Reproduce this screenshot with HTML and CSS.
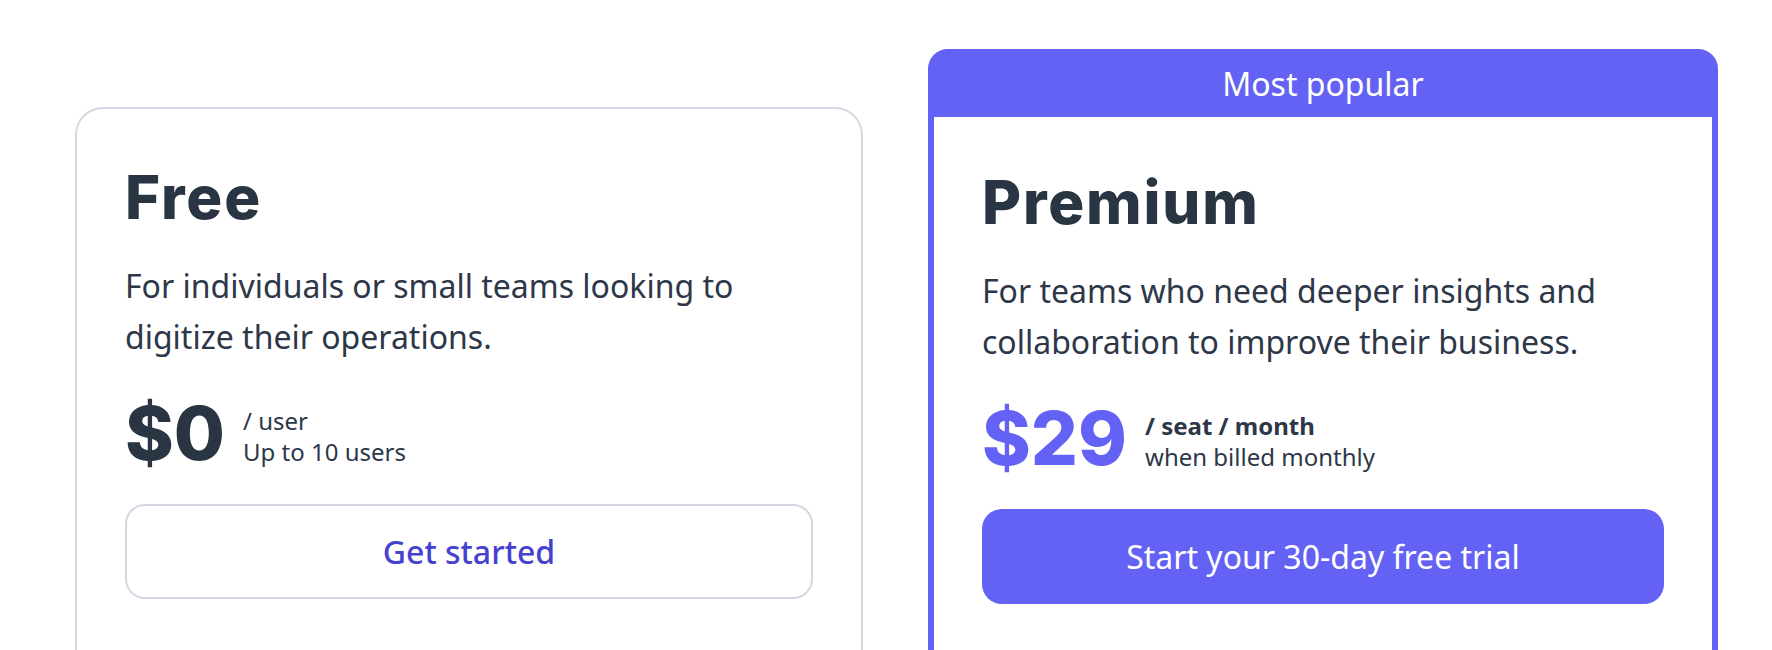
FILE: index.html
```html
<!DOCTYPE html>
<html lang="en">
<head>
<meta charset="utf-8">
<title>Pricing</title>
<link rel="stylesheet" href="styles.css">
</head>
<body>
<main class="plans">
  <section class="plan plan-free">
    <div class="plan-body">
      <h2 class="plan-name">Free</h2>
      <p class="plan-desc">For individuals or small teams looking to digitize their operations.</p>
      <div class="price-row">
        <span class="price">$0</span>
        <div class="price-meta">
          <span class="meta-line">/ user</span>
          <span class="meta-line">Up to 10 users</span>
        </div>
      </div>
      <a class="btn btn-outline" href="#">Get started</a>
    </div>
  </section>
  <section class="plan plan-premium">
    <div class="ribbon">Most popular</div>
    <div class="plan-body">
      <h2 class="plan-name">Premium</h2>
      <p class="plan-desc">For teams who need deeper insights and collaboration to improve their business.</p>
      <div class="price-row">
        <span class="price price-accent">$29</span>
        <div class="price-meta">
          <span class="meta-line meta-strong">/ seat / month</span>
          <span class="meta-line">when billed monthly</span>
        </div>
      </div>
      <a class="btn btn-solid" href="#">Start your 30-day free trial</a>
    </div>
  </section>
</main>
</body>
</html>
```
FILE: styles.css
```css
* { box-sizing: border-box; }
html, body { margin: 0; padding: 0; background: #ffffff; }
body {
  font-family: "Noto Sans", "Open Sans", sans-serif;
  color: #2d3748;
  height: 650px;
  overflow: hidden;
}
.plans {
  display: flex;
  align-items: flex-start;
  gap: 65px;
  padding: 49px 0 0 75px;
}
.plan {
  background: #fff;
  height: 700px;
}
.plan-free {
  width: 788px;
  margin-top: 58px;
  border: 2px solid #d3d8e2;
  border-radius: 28px;
}
.plan-premium {
  width: 790px;
  border: 6px solid #6462f5;
  border-radius: 20px 20px 0 0;
}
.ribbon {
  background: #6462f5;
  color: #fff;
  height: 62px;
  display: flex;
  align-items: center;
  justify-content: center;
  font-size: 32px;
  padding-bottom: 6px;
}
.plan-body {
  padding: 52px 48px 0 48px;
}
.plan-premium .plan-body { padding-top: 49px; }
.plan-name {
  margin: 0;
  font-family: Inter, "Noto Sans", sans-serif;
  font-weight: 800;
  font-size: 60px;
  line-height: 72px;
  color: #2a3544;
  letter-spacing: 1.8px;
}
.plan-desc {
  margin: 27px 0 0 0;
  font-size: 32px;
  line-height: 51px;
}
.price-row {
  display: flex;
  align-items: center;
  gap: 18px;
  margin-top: 34px;
}
.price {
  font-family: Inter, "Noto Sans", sans-serif;
  font-weight: 800;
  font-size: 74px;
  line-height: 74px;
  color: #2a3544;
}
.price-accent { color: #6462f5; }
.price-meta {
  display: flex;
  flex-direction: column;
  font-size: 24px;
  line-height: 31px;
  padding-top: 6px;
}
.meta-strong { font-weight: 700; }
.btn {
  display: flex;
  align-items: center;
  justify-content: center;
  height: 95px;
  margin-top: 34px;
  border-radius: 20px;
  font-size: 32px;
  text-decoration: none;
}
.btn-outline {
  border: 2px solid #d3d8e2;
  color: #4641d0;
  font-weight: 500;
}
.btn-solid {
  background: #6462f5;
  color: #fff;
  font-weight: 400;
}
```
